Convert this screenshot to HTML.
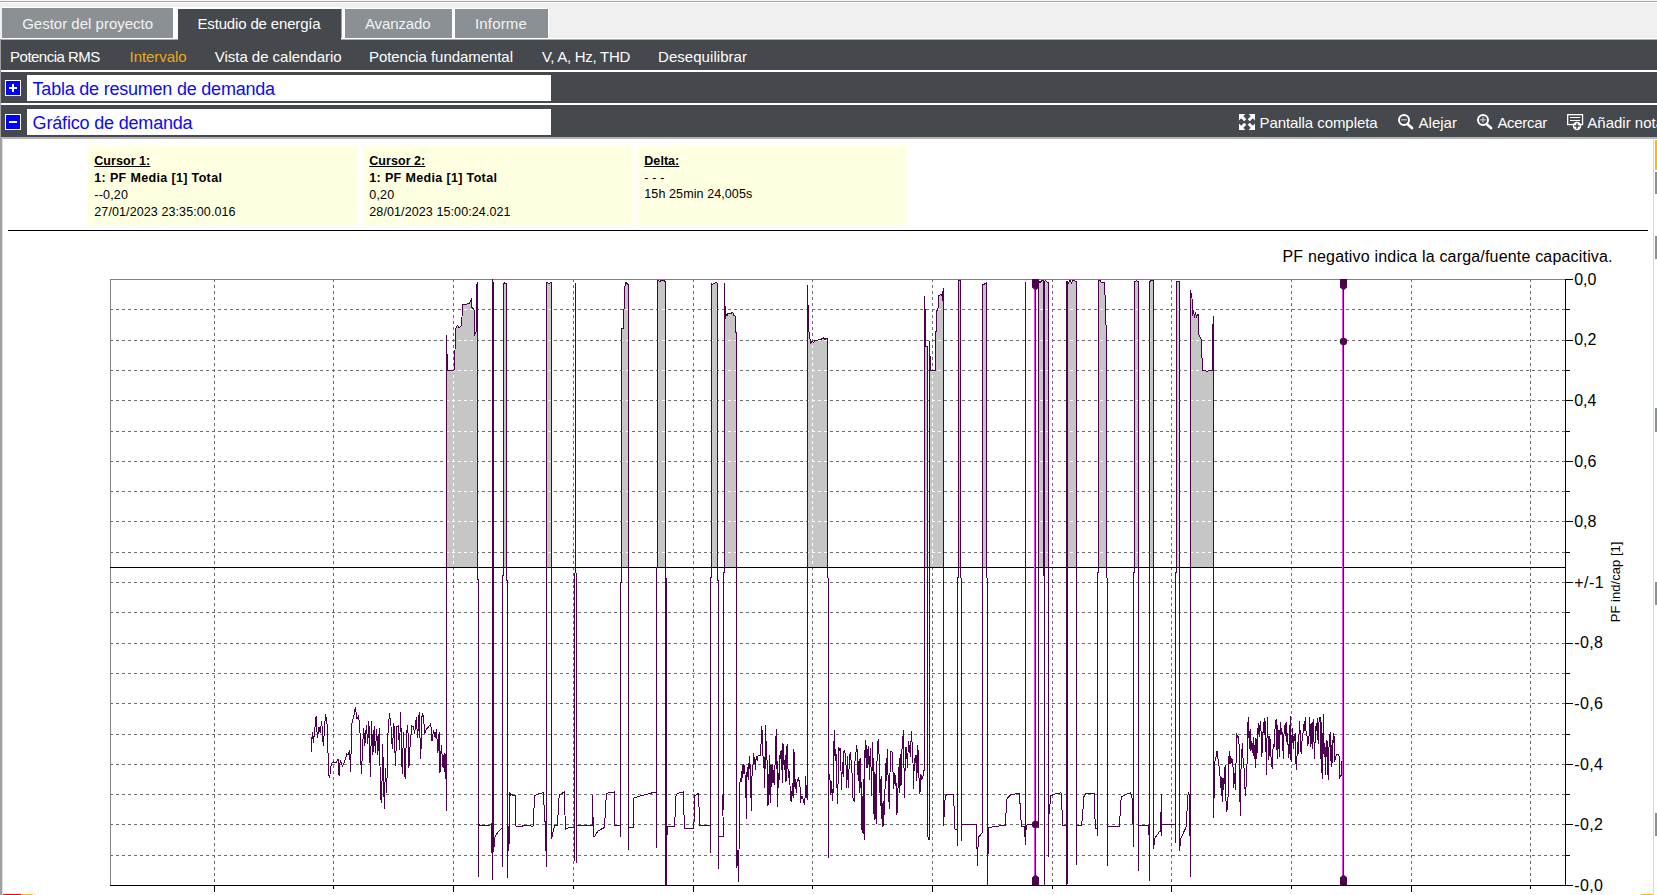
<!DOCTYPE html>
<html><head><meta charset="utf-8"><title>Estudio de energía</title>
<style>
*{box-sizing:border-box;margin:0;padding:0}
html,body{width:1657px;height:895px;overflow:hidden;background:#f0f0f0}
body{position:relative;font-family:"Liberation Sans",sans-serif;color:#fff}
.abs{position:absolute}
.t{position:absolute;white-space:nowrap;line-height:1}
.tab{position:absolute;background:#8a9094;color:#f4f4f4;font-size:15px}
.dark{position:absolute;background:#45484c}
.ico{position:absolute;width:16px;height:16px;background:#0000ff;border:1px solid #fff}
.box{position:absolute;top:145px;height:80px;width:270px;background:#ffffe1;color:#000;font-size:12.5px}
.box .t{left:6.3px;letter-spacing:.1px}
.b{font-weight:700}
.sb{position:absolute;left:1654.5px;width:2.5px;background:#8a9094}
</style></head><body>
<!-- top chrome -->
<div class="abs" style="left:0;top:0;width:1657px;height:1px;background:#f8f8f8"></div>
<div class="abs" style="left:0;top:1px;width:1657px;height:1px;background:#a6a6a6"></div>
<div class="abs" style="left:0;top:2px;width:1657px;height:1px;background:#fcfcfc"></div>

<!-- tabs -->
<div class="abs" style="left:2px;top:7px;width:172px;height:32px;background:#fff"></div>
<div class="tab" style="left:2px;top:8px;width:171px;height:30px"></div>
<div class="abs" style="left:174px;top:7px;width:167px;height:32px;background:#fff"></div><div class="abs" style="left:341px;top:9px;width:1px;height:29px;background:#9c9ea0"></div><div class="abs" style="left:342px;top:8px;width:3px;height:30px;background:#fafafa"></div><div class="abs" style="left:452px;top:8px;width:3px;height:30px;background:#fafafa"></div>
<div class="dark" style="left:178px;top:9px;width:163px;height:31px"></div>
<div class="abs" style="left:344px;top:8px;width:109px;height:31px;background:#fff"></div>
<div class="tab" style="left:345px;top:9px;width:107px;height:29px"></div>
<div class="abs" style="left:454px;top:8px;width:95px;height:31px;background:#fff"></div>
<div class="tab" style="left:455px;top:9px;width:93px;height:29px"></div>
<span class="t" style="left:22.2px;top:15.5px;font-size:15px;color:#f2f2f2">Gestor del proyecto</span>
<span class="t" style="left:197.5px;top:15.5px;font-size:15px;letter-spacing:-.16px">Estudio de energía</span>
<span class="t" style="left:365px;top:15.5px;font-size:15px;letter-spacing:-.12px;color:#f2f2f2">Avanzado</span>
<span class="t" style="left:475px;top:15.5px;font-size:15px;letter-spacing:.16px;color:#f2f2f2">Informe</span>

<div class="abs" style="left:0;top:38px;width:1657px;height:1px;background:#fff"></div>
<div class="abs" style="left:0;top:39px;width:1657px;height:1px;background:#aaacae"></div>
<div class="dark" style="left:178px;top:38px;width:163px;height:2px"></div>
<!-- left edge -->
<div class="abs" style="left:0;top:39px;width:2px;height:856px;background:#a0a0a0"></div>

<!-- submenu bar -->
<div class="dark" style="left:1px;top:40px;width:1656px;height:30px"></div>
<span class="t" style="left:10.1px;top:49px;font-size:15px;letter-spacing:-.52px">Potencia RMS</span>
<span class="t" style="left:129.6px;top:49px;font-size:15px;letter-spacing:-.06px;color:#eaa915">Intervalo</span>
<span class="t" style="left:214.8px;top:49px;font-size:15px;letter-spacing:-.03px">Vista de calendario</span>
<span class="t" style="left:369px;top:49px;font-size:15px;letter-spacing:-.06px">Potencia fundamental</span>
<span class="t" style="left:542px;top:49px;font-size:15px;letter-spacing:-.28px">V, A, Hz, THD</span>
<span class="t" style="left:658px;top:49px;font-size:15px;letter-spacing:.05px">Desequilibrar</span>

<!-- section rows -->
<div class="abs" style="left:1px;top:70px;width:1656px;height:2px;background:#fff"></div>
<div class="dark" style="left:1px;top:72px;width:1656px;height:31px"></div>
<div class="abs" style="left:27px;top:75px;width:524px;height:26px;background:#fff"></div>
<div class="ico" style="left:5px;top:80px"><svg width="14" height="14" viewBox="0 0 14 14" style="display:block"><path d="M3 7H11M7 3V11" stroke="#fff" stroke-width="2"/></svg></div>
<span class="t" style="left:32.6px;top:79.5px;font-size:18px;letter-spacing:-.22px;color:#0c0cf0">Tabla de resumen de demanda</span>

<div class="abs" style="left:1px;top:103px;width:1656px;height:2px;background:#fff"></div>
<div class="dark" style="left:1px;top:105px;width:1656px;height:32px"></div>
<div class="abs" style="left:27px;top:109px;width:524px;height:26px;background:#fff"></div>
<div class="ico" style="left:5px;top:114px"><svg width="14" height="14" viewBox="0 0 14 14" style="display:block"><path d="M3 7H11" stroke="#fff" stroke-width="2"/></svg></div>
<span class="t" style="left:32.6px;top:113.5px;font-size:18px;letter-spacing:-.18px;color:#0c0cf0">Gráfico de demanda</span>

<!-- toolbar -->
<svg class="abs" style="left:1239px;top:114px" width="16" height="16" viewBox="0 0 16 16"><g fill="#fff"><path d="M0 0H6.4L0 6.4ZM1.6 3.7L3.7 1.6L7.3 5.2L5.2 7.3Z"/><path d="M16 0H9.6L16 6.4ZM14.4 3.7L12.3 1.6L8.7 5.2L10.8 7.3Z"/><path d="M0 16H6.4L0 9.6ZM1.6 12.3L3.7 14.4L7.3 10.8L5.2 8.7Z"/><path d="M16 16H9.6L16 9.6ZM14.4 12.3L12.3 14.4L8.7 10.8L10.8 8.7Z"/></g></svg>
<span class="t" style="left:1259.5px;top:115px;font-size:15px;letter-spacing:-.07px">Pantalla completa</span>
<svg class="abs" style="left:1398px;top:114px" width="16" height="16" viewBox="0 0 16 16"><circle cx="6" cy="6" r="5" fill="none" stroke="#fff" stroke-width="2"/><path d="M9.8 10.2L14 14.1" stroke="#fff" stroke-width="2.7" stroke-linecap="round"/><path d="M3.2 5.7H8.8" stroke="#b4b4b4" stroke-width="1.5"/></svg>
<span class="t" style="left:1418.5px;top:115px;font-size:15px;letter-spacing:.02px">Alejar</span>
<svg class="abs" style="left:1477px;top:114px" width="16" height="16" viewBox="0 0 16 16"><circle cx="6" cy="6" r="5" fill="none" stroke="#fff" stroke-width="2"/><path d="M9.8 10.2L14 14.1" stroke="#fff" stroke-width="2.7" stroke-linecap="round"/><path d="M3.2 5.7H8.8M6 2.9V8.5" stroke="#b4b4b4" stroke-width="1.5"/></svg>
<span class="t" style="left:1497.4px;top:115px;font-size:15px;letter-spacing:-.3px">Acercar</span>
<svg class="abs" style="left:1567px;top:114px" width="17" height="17" viewBox="0 0 17 17"><rect x="0.65" y="0.65" width="14.9" height="9.9" fill="none" stroke="#fff" stroke-width="1.3"/><path d="M3 3.5H13.1M3 6.5H13.1" stroke="#fff" stroke-width="1.1"/><circle cx="10" cy="12" r="4.2" fill="#fff"/><path d="M7.3 12H12.7M10 9.3V14.7" stroke="#45484c" stroke-width="1.5"/></svg>
<span class="t" style="left:1587.3px;top:115px;font-size:15px">Añadir nota</span>

<!-- content area -->
<div class="abs" style="left:1px;top:137px;width:1656px;height:2px;background:#b4b6b8"></div>
<div class="abs" style="left:2px;top:139px;width:1651px;height:756px;background:#fff"></div>
<div class="abs" style="left:2px;top:139px;width:1px;height:756px;background:#dcdcdc"></div>
<div class="abs" style="left:1653px;top:139px;width:1px;height:756px;background:#d8d8d8"></div>
<div class="abs" style="left:1654px;top:139px;width:3px;height:756px;background:#fff"></div>
<div class="sb" style="top:140px;height:30px;background:#fdb813"></div>
<div class="sb" style="top:172px;height:22px"></div>
<div class="sb" style="top:236px;height:23px"></div>
<div class="sb" style="top:408px;height:24px"></div>
<div class="sb" style="top:582px;height:23px"></div>
<div class="sb" style="top:813px;height:23px"></div>
<div class="abs" style="left:3px;top:894px;width:18px;height:1px;background:#f00"></div>
<div class="abs" style="left:21px;top:894px;width:12px;height:1px;background:#fdb813"></div>
<div class="abs" style="left:1641px;top:893.5px;width:12px;height:1.5px;background:#fdb813"></div>

<!-- cursor boxes -->
<div class="box" style="left:88px">
<span class="t b" style="top:9.8px;text-decoration:underline;letter-spacing:.05px">Cursor 1:</span>
<span class="t b" style="top:26.8px;letter-spacing:.35px">1: PF Media [1] Total</span>
<span class="t" style="top:43.8px;letter-spacing:.2px">--0,20</span>
<span class="t" style="top:60.8px">27/01/2023 23:35:00.016</span>
</div>
<div class="box" style="left:363px">
<span class="t b" style="top:9.8px;text-decoration:underline;letter-spacing:.05px">Cursor 2:</span>
<span class="t b" style="top:26.8px;letter-spacing:.35px">1: PF Media [1] Total</span>
<span class="t" style="top:43.8px;letter-spacing:.2px">0,20</span>
<span class="t" style="top:60.8px">28/01/2023 15:00:24.021</span>
</div>
<div class="box" style="left:638px">
<span class="t b" style="top:9.8px;text-decoration:underline;letter-spacing:.05px">Delta:</span>
<span class="t" style="top:26.8px;letter-spacing:.2px">- - -</span>
<span class="t" style="top:43px">15h 25min 24,005s</span>
</div>
<div class="abs" style="left:8px;top:230px;width:1640px;height:1px;background:#000"></div>

<svg id="chart" width="1657" height="895" viewBox="0 0 1657 895" style="position:absolute;left:0;top:0">
<defs>
<clipPath id="up"><rect x="110" y="279" width="1456" height="288.5"/></clipPath>
<clipPath id="plot"><rect x="110" y="279" width="1456" height="607"/></clipPath>
<clipPath id="ser" clip-rule="evenodd"><path clip-rule="evenodd" d="M311.2 751.5 L312.3 732.5 L313.4 742.5 L316.1 716.4 L317.4 738.1 L319 726.9 L320.1 732.5 L321.7 721.3 L323.3 745.9 L325.5 714.1 L327.3 725.8 L328.6 775 L329.7 777.2 L331.3 763.8 L333.5 762 L335.8 762.7 L338 759.3 L339.1 776.1 L340.2 760.4 L342.5 766 L344.7 761.5 L346.9 753.7 L348.1 754.8 L349.6 750.4 L350.5 771.6 L351.9 723.5 L353.7 716.8 L355.4 707.4 L357 719.1 L358.6 715.7 L359.9 729.1 L360.8 761.5 L361.5 773.8 L362.6 745.9 L363.7 728 L364.8 745.9 L366.4 724.7 L367.7 743.7 L368.9 721.3 L370.4 777.2 L371.5 721.3 L372.9 754.8 L374.2 725.8 L375.3 752.6 L376.7 729.1 L377.8 754.8 L379.4 728 L380.5 797.3 L381.6 802.9 L382.7 743.7 L384.3 808.5 L385.4 768.2 L386.7 792.8 L387.9 734.7 L389.4 713.5 L391.2 728 L392.3 749.2 L393.9 723.5 L395.5 766 L396.8 726.9 L398.4 725.8 L399.5 750.4 L400.6 712.4 L402.2 773.8 L403.5 732.5 L405.1 779.4 L406.4 734.7 L407.8 724.7 L408.9 768.2 L410.2 743.7 L411.8 725.8 L413.3 726.9 L414.7 733.6 L416.3 716.8 L417.6 738.1 L419.2 712.4 L420.7 759.3 L422.1 713.5 L423.4 715.7 L424.7 733.6 L426.3 729.1 L428.5 726.9 L430.8 723.5 L431.9 741.4 L433.5 730.2 L435.3 738.1 L436.4 729.1 L437.9 752.6 L439.1 732.5 L440 772.7 L441.3 744.8 L443.1 768.2 L444.2 752.6 L445.3 779.4 L446.2 747 L446.5 811 L446.5 335 L447.5 370 L454 370 L455 350 L456 328 L457.5 325.5 L459 328 L461 326.5 L462 317 L462.5 305 L466 304.5 L469.5 303 L471.5 299 L472 307.5 L473.5 309 L474.5 311 L474.5 334.7 L476.5 331.5 L476.5 285.5 L477.5 282.5 L477.5 579 L478.5 579 L478.5 876.5 L478.5 824 L480 826 L485 825.5 L490 825 L491.5 824 L492.5 880 L492.5 279.5 L493.5 285 L493.5 851.6 L495 837 L498 832 L502 828 L502.5 866.6 L502.5 575 L503.5 575 L503.5 284 L504.5 283 L506.5 284 L506.5 580 L507.5 580 L507.5 877.5 L508.5 826 L509.5 843.7 L509.5 792 L510.5 795 L512 794 L513 796 L515 795 L515.5 826 L520 826.5 L525 825.5 L533 826.2 L534.7 795.7 L538 794 L543.3 792.7 L545.2 824.4 L546.5 866.6 L546.5 283 L547.5 282.6 L549 283.5 L551.5 282.6 L551.5 838.7 L554.7 825 L557.4 825 L559.2 795 L564.2 792 L565.5 829 L570 827 L574 828 L574.5 860.6 L574.5 574 L575.5 572 L575.5 283.3 L575.5 572 L576.5 574 L576.5 862.9 L577 825.2 L585 825.5 L592.4 825.2 L592.5 795 L593.5 836.5 L594.6 836.5 L598 831 L604.5 827.4 L606.4 793.5 L610 792.5 L614.3 792 L615 825.2 L620.3 825.2 L620.5 836.5 L620.5 582 L621.5 582 L621.5 328.6 L623.5 328.6 L624.5 290 L625.5 282.3 L628.5 284.8 L628.5 850.4 L628.6 827.4 L633.1 827.4 L633.9 798 L640 796 L648 794 L655 792 L656.5 792 L656.5 847.8 L656.5 570 L657.5 565 L657.5 280.3 L660 281.5 L662 280 L664.5 281 L665.5 282 L665.5 884.8 L666.5 884.8 L666.5 578 L666.5 840 L667.8 826 L674.6 826 L676.1 794.5 L680 792.5 L683.2 792 L684.5 828.4 L689 828 L693.8 828.4 L694.9 795.5 L698.5 793.4 L699.7 825.2 L705 825.5 L710.3 825.2 L710.5 853.2 L710.5 580 L711.5 575 L711.5 283.5 L712 285 L713 284 L716 282.5 L717.5 283.5 L717.5 580 L718.5 580 L718.5 868.7 L718.5 836.9 L723.5 836.9 L722.5 795 L723.5 810 L723.5 575 L724.5 570 L724.5 283 L725.3 318.8 L726 314 L727 316 L728 313 L730 314 L732.8 312 L733.5 315 L735 315.8 L736 332.4 L736.5 332.4 L736.5 867.7 L737.5 850 L738.5 882 L739 850 L739.5 815.6 L739.5 784.3 L740.8 778.1 L741.7 782 L742.2 764.7 L742.8 777.6 L743.7 764.2 L744.4 770.9 L744.8 764.7 L745.5 798.2 L745.8 775.9 L746.4 818.9 L746.8 774.2 L747.5 767.5 L748.2 780.4 L748.9 765.3 L749.5 756.3 L750 768.6 L750.6 763.6 L751.1 804.4 L751.5 810.5 L752 775.9 L752.7 775.3 L753.4 753.5 L754 764.2 L754.9 756.9 L755.6 769.7 L756.2 756.3 L757.3 760.8 L758 755.8 L760.1 755.8 L760.9 748.5 L761.5 726.2 L762 732.9 L762.5 730.1 L762.9 753.5 L763.6 767.5 L764.3 757.5 L764.7 787.6 L765.2 757.5 L765.6 725.3 L766.1 744.6 L766.7 744.1 L767.2 769.7 L767.6 805.5 L768.3 804.9 L768.7 788.7 L769.4 755.2 L769.9 793.2 L770.5 802.7 L771 764.7 L771.6 786.5 L772.3 764.2 L773 783.2 L773.7 769.7 L774.3 785.4 L775 765.3 L775.7 736.2 L776.3 764.2 L776.8 729.3 L777.2 806.6 L777.7 760.8 L778.4 787.6 L779 775.3 L779.5 779.8 L780.1 750.8 L780.8 754.1 L781.5 769.7 L782.2 743.5 L782.6 783.2 L783 743.5 L783.7 757.5 L784.2 769.7 L784.8 759.7 L785.5 781.5 L786.2 746.3 L786.6 780.9 L787.3 744.3 L788 768.6 L788.6 777.6 L789.3 770.9 L790 785.4 L790.6 801 L791.3 791 L791.8 802.2 L792.4 783.2 L793.1 797.7 L793.5 749.1 L794 784.3 L794.4 752.4 L794.9 786.5 L795.6 779.2 L796.2 793.2 L796.9 782 L797.6 780.9 L798.5 777.6 L799.1 782 L799.8 779.8 L800.5 803.3 L801.1 796.6 L801.8 798.2 L802.5 797.1 L803.4 801 L804.3 804.4 L804.9 802.2 L805.6 776.5 L806.1 797.7 L806.7 785.4 L807.4 799.4 L807.5 799.7 L807.5 285.3 L808.5 323 L809 332 L810.5 343 L812 341.5 L813.5 342.5 L815 340.5 L817 341 L819 339 L821 339.5 L823.3 337.5 L825 339.5 L826 338 L827.5 338.4 L827.5 575 L828.5 580 L828.5 857.5 L828.9 773.8 L830 780 L830.9 794.7 L831.7 781.4 L832.5 801 L833.1 791.9 L833.7 747.9 L834.5 730.1 L835.1 760.5 L835.9 749.3 L836.7 780 L837.6 803.8 L838.1 780 L838.7 747.2 L839.5 750 L840.4 747.9 L841.5 789.8 L842.3 761.9 L843.2 777.2 L844 750.7 L844.8 751.4 L845.9 761.9 L846.8 788.4 L847.6 756.3 L848.5 788.4 L849.3 757.7 L850.4 752.1 L851.2 761.9 L852.1 774.5 L852.9 797.5 L854.3 801.7 L854.9 761.9 L855.7 756.3 L856.6 745.1 L857.4 753.5 L858.2 781.4 L859.1 759.1 L859.9 792.6 L860.7 758.4 L861.6 826.1 L862.4 833.1 L863.3 778.6 L864.1 840.1 L864.7 756.3 L865.5 740.2 L866.3 767.5 L866.9 745.1 L867.7 767.5 L868.6 746.5 L869.4 780 L870.2 747.9 L871.1 768.9 L871.6 796.1 L872.5 742.3 L873.3 766.1 L874.1 819.8 L875 771.7 L875.5 812.2 L876.4 824 L877.2 742.3 L878.6 739.5 L879.5 771.7 L880.3 805.9 L881.1 775.9 L882.2 826.8 L883.1 801 L883.6 826.1 L884.5 802.4 L885.3 781.4 L886.2 757.7 L886.7 781.4 L887.6 749.3 L888.1 780 L888.9 800.3 L889.5 808.7 L890.3 752.1 L891.5 751.4 L892.6 752.8 L893.4 789.1 L894.3 773.1 L895.1 785.6 L895.9 775.2 L896.5 814.9 L897.6 811.5 L898.4 767.5 L899.3 792.6 L900.1 754.2 L901 785.6 L901.8 752.1 L902.6 740.2 L903.5 730.1 L904 767.5 L904.6 797.5 L905.4 747.2 L906.5 747.9 L907.4 767.5 L908.5 740.9 L909.6 749.3 L910.5 757 L911.3 731.2 L912.1 743 L913 763.3 L913.5 789.1 L914.4 757.7 L915.2 762.6 L916 754.9 L916.9 781.4 L917.4 745.1 L918.3 752.1 L919.1 781.4 L919.9 794 L920.8 773.8 L921.9 779.3 L923 775.9 L923.9 770.3 L924.5 770 L924.5 296 L925.5 321 L925.5 346 L927.5 346 L927.5 834 L928.5 839.5 L929.5 839.5 L929.5 341.4 L930.5 370 L935.5 370 L935.5 331.4 L936.5 331.4 L936.5 310.2 L937.5 310 L937.5 308.5 L938.3 308 L938.3 296.8 L939 295.6 L941.8 294 L942.4 300.7 L942.6 294 L943.5 288 L943.5 825.6 L945.2 796.5 L947 794.5 L953.5 794.5 L955 829 L957.2 829 L957.5 845.5 L957.5 580 L958.5 575 L958.5 280.5 L960.5 280.5 L960.5 575 L961.5 580 L961.5 840.7 L962 824.7 L970 824 L976.6 824.7 L977.3 865.6 L978.4 837.2 L982.4 832.7 L982.5 284.8 L984.5 284 L986.5 283 L986.5 575 L987.5 580 L987.5 884.8 L987.5 853 L988.5 853 L988.5 827.4 L996 826.5 L1005.2 825.2 L1007 798.8 L1010.8 794.5 L1019.4 793.5 L1021.4 826 L1024.4 826 L1025.5 844.8 L1025.5 282.3 L1025.5 835 L1026.5 826 L1027 824.7 L1038.5 824.7 L1038.5 827.6 L1038.5 281 L1040 282.5 L1042 280.5 L1043.5 281 L1043.5 575 L1044.5 575 L1044.5 884.8 L1044.5 282 L1045.5 280.5 L1047 282 L1048.5 282 L1048.5 856.8 L1048.5 819.9 L1050.8 795.7 L1055 794 L1061 792.7 L1062.9 825.2 L1065.9 825.2 L1066.5 826 L1066.5 885 L1066.5 281 L1067.5 281 L1067.5 884 L1067.5 283 L1068.5 283 L1070 280.5 L1071.5 283 L1073 280.5 L1076.5 281.5 L1076.5 864.8 L1077 825.2 L1081.7 825.2 L1084 796.5 L1086 793.5 L1094.2 793.5 L1095.3 828.2 L1097.5 828.2 L1097.5 835.7 L1097.5 575 L1098.5 570 L1098.5 281 L1100 280.5 L1102 283 L1104.3 282.6 L1105.7 306.7 L1106.1 329.3 L1106.5 575 L1107.5 580 L1107.5 865.9 L1108 826.7 L1119.4 826.7 L1121.2 797.2 L1126 794.5 L1130.8 792.7 L1132.5 800 L1133.5 846.7 L1133.5 575 L1134.5 570 L1134.5 282 L1136.5 280.5 L1138.5 282 L1138.5 870.9 L1139 825.2 L1148.9 825.2 L1149.5 880.5 L1149.5 281.5 L1151.5 280.5 L1153.5 281 L1153.5 848.6 L1155 838 L1159.5 831.6 L1160.5 831 L1161.5 794.4 L1161.5 835.7 L1162 824.8 L1175.5 824.8 L1175.5 843.3 L1175.5 575 L1176.5 570 L1176.5 281.8 L1179.5 282 L1179.5 850.7 L1181 838 L1186 827.3 L1188.2 792.3 L1189.5 795 L1190.5 876.6 L1190.5 290 L1192 298.4 L1192.5 315.8 L1193.5 310 L1194.5 318 L1195.5 312 L1196.5 317 L1198 314 L1198.8 334.6 L1201 339 L1201.9 355 L1202.6 370.8 L1205 370 L1207 372 L1209 370.5 L1212.4 370.8 L1212.4 333.9 L1213.5 316.5 L1213.5 818.4 L1214.2 790.8 L1214.7 762.7 L1215.5 758 L1216.3 756.6 L1217.1 750.6 L1217.9 758.6 L1218.7 764 L1219.8 772.1 L1220.6 788.2 L1221.4 777.4 L1222.2 801.6 L1223 778.1 L1223.8 789.5 L1224.6 768 L1225.4 765.4 L1226.2 812.3 L1227 801.6 L1227.8 810.3 L1228.4 770.7 L1229.2 751.3 L1230 764 L1230.8 756 L1231.6 762.7 L1232.4 758.6 L1233.2 769.4 L1233.8 788.2 L1234.6 773.4 L1235.4 789.5 L1235.9 772.1 L1236.4 733.2 L1237.5 737.2 L1238.3 736.5 L1239.1 745.2 L1239.7 793.5 L1240.5 815.6 L1241 769.4 L1241.8 751.9 L1242.6 742.6 L1243.1 761.3 L1243.9 765.4 L1244.7 785.5 L1245.6 795.5 L1246.4 780.1 L1246.9 770.7 L1247.7 725.1 L1248.5 717.3 L1249.3 749.3 L1250.1 729.1 L1250.9 751.3 L1251.7 741.2 L1252.5 753.3 L1253.3 737.2 L1254.1 758 L1254.7 745.2 L1255.2 768 L1256 738.5 L1256.8 759.3 L1257.6 733.8 L1258.4 723.1 L1259.2 737.2 L1260.3 721.1 L1261.1 731.8 L1261.6 756.6 L1262.5 749.3 L1263.3 721.8 L1264.1 734.5 L1264.9 718.4 L1265.7 736.5 L1266.5 774.7 L1267.3 717.3 L1268.1 738.5 L1268.9 760 L1269.7 735.8 L1270.5 745.2 L1271.3 764 L1272.4 768.7 L1273.2 743.9 L1274 747.9 L1274.8 731.8 L1275.6 721.8 L1276.4 719.1 L1277.2 758.6 L1277.7 725.1 L1278.5 738.5 L1279.4 757.3 L1280.2 722.4 L1281 734.5 L1281.8 728.5 L1282.6 742.6 L1283.4 759.3 L1284.2 726.5 L1285 725.1 L1285 736.4 L1285.8 724 L1286.3 722.1 L1286.9 742.1 L1287.7 733.5 L1288.4 757.8 L1289 744.9 L1289.6 725 L1290.1 760.1 L1290.5 716.4 L1291.1 738.3 L1291.7 761.6 L1292.2 727.8 L1292.8 740.2 L1293.4 748.7 L1293.9 736.4 L1294.5 741.1 L1295.1 733 L1295.6 758.2 L1296.4 769.6 L1297 756.3 L1297.7 742.1 L1298.3 754.4 L1298.9 738.3 L1299.4 721.2 L1300 729.7 L1300.6 751.6 L1301.3 752.5 L1301.9 741.1 L1302.7 740.2 L1303.4 724.5 L1304 731.6 L1304.8 724 L1305.3 717.2 L1306.1 732.6 L1306.9 733.5 L1307.6 745.9 L1308.4 743 L1309 736.4 L1309.5 717.2 L1310.3 727.8 L1310.9 747.3 L1311.6 725 L1312.4 722.1 L1312.9 748.7 L1313.3 719.3 L1313.9 738.3 L1314.5 758.7 L1315 743 L1315.6 730.2 L1316.4 723.1 L1316.9 730.7 L1317.5 718.3 L1318.1 743.5 L1318.7 729.7 L1319.2 717.2 L1320.2 717.8 L1320.7 743.5 L1321.3 772.5 L1321.9 722.1 L1322.5 778.7 L1323 756.8 L1323.4 714 L1324 743 L1324.5 757.3 L1325.1 746.8 L1325.7 774.9 L1326.3 740.6 L1327 740.2 L1327.6 767.7 L1328.3 779.6 L1328.9 750.6 L1329.5 734.5 L1330.2 733.5 L1330.8 758.2 L1331.6 766.8 L1332.1 740.2 L1332.7 763 L1333.1 738.3 L1333.5 732.6 L1334.2 737.3 L1334.6 762 L1335.4 757.3 L1336.3 755.4 L1337.3 754.4 L1338.4 754.4 L1339.4 756.8 L1339.6 777.7 L1340.5 776.3 L1341.3 774.9 L1341.7 761.1 L1342.2 775.3Z"/></clipPath>
</defs>
<g shape-rendering="crispEdges" fill="none">
<path d="M110 309.5H1566M110 340.5H1566M110 370.5H1566M110 400.5H1566M110 431.5H1566M110 461.5H1566M110 491.5H1566M110 521.5H1566M110 552.5H1566M110 582.5H1566M110 612.5H1566M110 643.5H1566M110 673.5H1566M110 703.5H1566M110 734.5H1566M110 764.5H1566M110 794.5H1566M110 824.5H1566M110 855.5H1566M214.5 279V885M333.5 279V885M453.5 279V885M573.5 279V885M693.5 279V885M812.5 279V885M932.5 279V885M1052.5 279V885M1171.5 279V885M1291.5 279V885M1411.5 279V885M1530.5 279V885" stroke="#6e6e6e" stroke-width="1" stroke-dasharray="3 3"/>
<g clip-path="url(#up)"><path d="M311.2 751.5 L312.3 732.5 L313.4 742.5 L316.1 716.4 L317.4 738.1 L319 726.9 L320.1 732.5 L321.7 721.3 L323.3 745.9 L325.5 714.1 L327.3 725.8 L328.6 775 L329.7 777.2 L331.3 763.8 L333.5 762 L335.8 762.7 L338 759.3 L339.1 776.1 L340.2 760.4 L342.5 766 L344.7 761.5 L346.9 753.7 L348.1 754.8 L349.6 750.4 L350.5 771.6 L351.9 723.5 L353.7 716.8 L355.4 707.4 L357 719.1 L358.6 715.7 L359.9 729.1 L360.8 761.5 L361.5 773.8 L362.6 745.9 L363.7 728 L364.8 745.9 L366.4 724.7 L367.7 743.7 L368.9 721.3 L370.4 777.2 L371.5 721.3 L372.9 754.8 L374.2 725.8 L375.3 752.6 L376.7 729.1 L377.8 754.8 L379.4 728 L380.5 797.3 L381.6 802.9 L382.7 743.7 L384.3 808.5 L385.4 768.2 L386.7 792.8 L387.9 734.7 L389.4 713.5 L391.2 728 L392.3 749.2 L393.9 723.5 L395.5 766 L396.8 726.9 L398.4 725.8 L399.5 750.4 L400.6 712.4 L402.2 773.8 L403.5 732.5 L405.1 779.4 L406.4 734.7 L407.8 724.7 L408.9 768.2 L410.2 743.7 L411.8 725.8 L413.3 726.9 L414.7 733.6 L416.3 716.8 L417.6 738.1 L419.2 712.4 L420.7 759.3 L422.1 713.5 L423.4 715.7 L424.7 733.6 L426.3 729.1 L428.5 726.9 L430.8 723.5 L431.9 741.4 L433.5 730.2 L435.3 738.1 L436.4 729.1 L437.9 752.6 L439.1 732.5 L440 772.7 L441.3 744.8 L443.1 768.2 L444.2 752.6 L445.3 779.4 L446.2 747 L446.5 811 L446.5 335 L447.5 370 L454 370 L455 350 L456 328 L457.5 325.5 L459 328 L461 326.5 L462 317 L462.5 305 L466 304.5 L469.5 303 L471.5 299 L472 307.5 L473.5 309 L474.5 311 L474.5 334.7 L476.5 331.5 L476.5 285.5 L477.5 282.5 L477.5 579 L478.5 579 L478.5 876.5 L478.5 824 L480 826 L485 825.5 L490 825 L491.5 824 L492.5 880 L492.5 279.5 L493.5 285 L493.5 851.6 L495 837 L498 832 L502 828 L502.5 866.6 L502.5 575 L503.5 575 L503.5 284 L504.5 283 L506.5 284 L506.5 580 L507.5 580 L507.5 877.5 L508.5 826 L509.5 843.7 L509.5 792 L510.5 795 L512 794 L513 796 L515 795 L515.5 826 L520 826.5 L525 825.5 L533 826.2 L534.7 795.7 L538 794 L543.3 792.7 L545.2 824.4 L546.5 866.6 L546.5 283 L547.5 282.6 L549 283.5 L551.5 282.6 L551.5 838.7 L554.7 825 L557.4 825 L559.2 795 L564.2 792 L565.5 829 L570 827 L574 828 L574.5 860.6 L574.5 574 L575.5 572 L575.5 283.3 L575.5 572 L576.5 574 L576.5 862.9 L577 825.2 L585 825.5 L592.4 825.2 L592.5 795 L593.5 836.5 L594.6 836.5 L598 831 L604.5 827.4 L606.4 793.5 L610 792.5 L614.3 792 L615 825.2 L620.3 825.2 L620.5 836.5 L620.5 582 L621.5 582 L621.5 328.6 L623.5 328.6 L624.5 290 L625.5 282.3 L628.5 284.8 L628.5 850.4 L628.6 827.4 L633.1 827.4 L633.9 798 L640 796 L648 794 L655 792 L656.5 792 L656.5 847.8 L656.5 570 L657.5 565 L657.5 280.3 L660 281.5 L662 280 L664.5 281 L665.5 282 L665.5 884.8 L666.5 884.8 L666.5 578 L666.5 840 L667.8 826 L674.6 826 L676.1 794.5 L680 792.5 L683.2 792 L684.5 828.4 L689 828 L693.8 828.4 L694.9 795.5 L698.5 793.4 L699.7 825.2 L705 825.5 L710.3 825.2 L710.5 853.2 L710.5 580 L711.5 575 L711.5 283.5 L712 285 L713 284 L716 282.5 L717.5 283.5 L717.5 580 L718.5 580 L718.5 868.7 L718.5 836.9 L723.5 836.9 L722.5 795 L723.5 810 L723.5 575 L724.5 570 L724.5 283 L725.3 318.8 L726 314 L727 316 L728 313 L730 314 L732.8 312 L733.5 315 L735 315.8 L736 332.4 L736.5 332.4 L736.5 867.7 L737.5 850 L738.5 882 L739 850 L739.5 815.6 L739.5 784.3 L740.8 778.1 L741.7 782 L742.2 764.7 L742.8 777.6 L743.7 764.2 L744.4 770.9 L744.8 764.7 L745.5 798.2 L745.8 775.9 L746.4 818.9 L746.8 774.2 L747.5 767.5 L748.2 780.4 L748.9 765.3 L749.5 756.3 L750 768.6 L750.6 763.6 L751.1 804.4 L751.5 810.5 L752 775.9 L752.7 775.3 L753.4 753.5 L754 764.2 L754.9 756.9 L755.6 769.7 L756.2 756.3 L757.3 760.8 L758 755.8 L760.1 755.8 L760.9 748.5 L761.5 726.2 L762 732.9 L762.5 730.1 L762.9 753.5 L763.6 767.5 L764.3 757.5 L764.7 787.6 L765.2 757.5 L765.6 725.3 L766.1 744.6 L766.7 744.1 L767.2 769.7 L767.6 805.5 L768.3 804.9 L768.7 788.7 L769.4 755.2 L769.9 793.2 L770.5 802.7 L771 764.7 L771.6 786.5 L772.3 764.2 L773 783.2 L773.7 769.7 L774.3 785.4 L775 765.3 L775.7 736.2 L776.3 764.2 L776.8 729.3 L777.2 806.6 L777.7 760.8 L778.4 787.6 L779 775.3 L779.5 779.8 L780.1 750.8 L780.8 754.1 L781.5 769.7 L782.2 743.5 L782.6 783.2 L783 743.5 L783.7 757.5 L784.2 769.7 L784.8 759.7 L785.5 781.5 L786.2 746.3 L786.6 780.9 L787.3 744.3 L788 768.6 L788.6 777.6 L789.3 770.9 L790 785.4 L790.6 801 L791.3 791 L791.8 802.2 L792.4 783.2 L793.1 797.7 L793.5 749.1 L794 784.3 L794.4 752.4 L794.9 786.5 L795.6 779.2 L796.2 793.2 L796.9 782 L797.6 780.9 L798.5 777.6 L799.1 782 L799.8 779.8 L800.5 803.3 L801.1 796.6 L801.8 798.2 L802.5 797.1 L803.4 801 L804.3 804.4 L804.9 802.2 L805.6 776.5 L806.1 797.7 L806.7 785.4 L807.4 799.4 L807.5 799.7 L807.5 285.3 L808.5 323 L809 332 L810.5 343 L812 341.5 L813.5 342.5 L815 340.5 L817 341 L819 339 L821 339.5 L823.3 337.5 L825 339.5 L826 338 L827.5 338.4 L827.5 575 L828.5 580 L828.5 857.5 L828.9 773.8 L830 780 L830.9 794.7 L831.7 781.4 L832.5 801 L833.1 791.9 L833.7 747.9 L834.5 730.1 L835.1 760.5 L835.9 749.3 L836.7 780 L837.6 803.8 L838.1 780 L838.7 747.2 L839.5 750 L840.4 747.9 L841.5 789.8 L842.3 761.9 L843.2 777.2 L844 750.7 L844.8 751.4 L845.9 761.9 L846.8 788.4 L847.6 756.3 L848.5 788.4 L849.3 757.7 L850.4 752.1 L851.2 761.9 L852.1 774.5 L852.9 797.5 L854.3 801.7 L854.9 761.9 L855.7 756.3 L856.6 745.1 L857.4 753.5 L858.2 781.4 L859.1 759.1 L859.9 792.6 L860.7 758.4 L861.6 826.1 L862.4 833.1 L863.3 778.6 L864.1 840.1 L864.7 756.3 L865.5 740.2 L866.3 767.5 L866.9 745.1 L867.7 767.5 L868.6 746.5 L869.4 780 L870.2 747.9 L871.1 768.9 L871.6 796.1 L872.5 742.3 L873.3 766.1 L874.1 819.8 L875 771.7 L875.5 812.2 L876.4 824 L877.2 742.3 L878.6 739.5 L879.5 771.7 L880.3 805.9 L881.1 775.9 L882.2 826.8 L883.1 801 L883.6 826.1 L884.5 802.4 L885.3 781.4 L886.2 757.7 L886.7 781.4 L887.6 749.3 L888.1 780 L888.9 800.3 L889.5 808.7 L890.3 752.1 L891.5 751.4 L892.6 752.8 L893.4 789.1 L894.3 773.1 L895.1 785.6 L895.9 775.2 L896.5 814.9 L897.6 811.5 L898.4 767.5 L899.3 792.6 L900.1 754.2 L901 785.6 L901.8 752.1 L902.6 740.2 L903.5 730.1 L904 767.5 L904.6 797.5 L905.4 747.2 L906.5 747.9 L907.4 767.5 L908.5 740.9 L909.6 749.3 L910.5 757 L911.3 731.2 L912.1 743 L913 763.3 L913.5 789.1 L914.4 757.7 L915.2 762.6 L916 754.9 L916.9 781.4 L917.4 745.1 L918.3 752.1 L919.1 781.4 L919.9 794 L920.8 773.8 L921.9 779.3 L923 775.9 L923.9 770.3 L924.5 770 L924.5 296 L925.5 321 L925.5 346 L927.5 346 L927.5 834 L928.5 839.5 L929.5 839.5 L929.5 341.4 L930.5 370 L935.5 370 L935.5 331.4 L936.5 331.4 L936.5 310.2 L937.5 310 L937.5 308.5 L938.3 308 L938.3 296.8 L939 295.6 L941.8 294 L942.4 300.7 L942.6 294 L943.5 288 L943.5 825.6 L945.2 796.5 L947 794.5 L953.5 794.5 L955 829 L957.2 829 L957.5 845.5 L957.5 580 L958.5 575 L958.5 280.5 L960.5 280.5 L960.5 575 L961.5 580 L961.5 840.7 L962 824.7 L970 824 L976.6 824.7 L977.3 865.6 L978.4 837.2 L982.4 832.7 L982.5 284.8 L984.5 284 L986.5 283 L986.5 575 L987.5 580 L987.5 884.8 L987.5 853 L988.5 853 L988.5 827.4 L996 826.5 L1005.2 825.2 L1007 798.8 L1010.8 794.5 L1019.4 793.5 L1021.4 826 L1024.4 826 L1025.5 844.8 L1025.5 282.3 L1025.5 835 L1026.5 826 L1027 824.7 L1038.5 824.7 L1038.5 827.6 L1038.5 281 L1040 282.5 L1042 280.5 L1043.5 281 L1043.5 575 L1044.5 575 L1044.5 884.8 L1044.5 282 L1045.5 280.5 L1047 282 L1048.5 282 L1048.5 856.8 L1048.5 819.9 L1050.8 795.7 L1055 794 L1061 792.7 L1062.9 825.2 L1065.9 825.2 L1066.5 826 L1066.5 885 L1066.5 281 L1067.5 281 L1067.5 884 L1067.5 283 L1068.5 283 L1070 280.5 L1071.5 283 L1073 280.5 L1076.5 281.5 L1076.5 864.8 L1077 825.2 L1081.7 825.2 L1084 796.5 L1086 793.5 L1094.2 793.5 L1095.3 828.2 L1097.5 828.2 L1097.5 835.7 L1097.5 575 L1098.5 570 L1098.5 281 L1100 280.5 L1102 283 L1104.3 282.6 L1105.7 306.7 L1106.1 329.3 L1106.5 575 L1107.5 580 L1107.5 865.9 L1108 826.7 L1119.4 826.7 L1121.2 797.2 L1126 794.5 L1130.8 792.7 L1132.5 800 L1133.5 846.7 L1133.5 575 L1134.5 570 L1134.5 282 L1136.5 280.5 L1138.5 282 L1138.5 870.9 L1139 825.2 L1148.9 825.2 L1149.5 880.5 L1149.5 281.5 L1151.5 280.5 L1153.5 281 L1153.5 848.6 L1155 838 L1159.5 831.6 L1160.5 831 L1161.5 794.4 L1161.5 835.7 L1162 824.8 L1175.5 824.8 L1175.5 843.3 L1175.5 575 L1176.5 570 L1176.5 281.8 L1179.5 282 L1179.5 850.7 L1181 838 L1186 827.3 L1188.2 792.3 L1189.5 795 L1190.5 876.6 L1190.5 290 L1192 298.4 L1192.5 315.8 L1193.5 310 L1194.5 318 L1195.5 312 L1196.5 317 L1198 314 L1198.8 334.6 L1201 339 L1201.9 355 L1202.6 370.8 L1205 370 L1207 372 L1209 370.5 L1212.4 370.8 L1212.4 333.9 L1213.5 316.5 L1213.5 818.4 L1214.2 790.8 L1214.7 762.7 L1215.5 758 L1216.3 756.6 L1217.1 750.6 L1217.9 758.6 L1218.7 764 L1219.8 772.1 L1220.6 788.2 L1221.4 777.4 L1222.2 801.6 L1223 778.1 L1223.8 789.5 L1224.6 768 L1225.4 765.4 L1226.2 812.3 L1227 801.6 L1227.8 810.3 L1228.4 770.7 L1229.2 751.3 L1230 764 L1230.8 756 L1231.6 762.7 L1232.4 758.6 L1233.2 769.4 L1233.8 788.2 L1234.6 773.4 L1235.4 789.5 L1235.9 772.1 L1236.4 733.2 L1237.5 737.2 L1238.3 736.5 L1239.1 745.2 L1239.7 793.5 L1240.5 815.6 L1241 769.4 L1241.8 751.9 L1242.6 742.6 L1243.1 761.3 L1243.9 765.4 L1244.7 785.5 L1245.6 795.5 L1246.4 780.1 L1246.9 770.7 L1247.7 725.1 L1248.5 717.3 L1249.3 749.3 L1250.1 729.1 L1250.9 751.3 L1251.7 741.2 L1252.5 753.3 L1253.3 737.2 L1254.1 758 L1254.7 745.2 L1255.2 768 L1256 738.5 L1256.8 759.3 L1257.6 733.8 L1258.4 723.1 L1259.2 737.2 L1260.3 721.1 L1261.1 731.8 L1261.6 756.6 L1262.5 749.3 L1263.3 721.8 L1264.1 734.5 L1264.9 718.4 L1265.7 736.5 L1266.5 774.7 L1267.3 717.3 L1268.1 738.5 L1268.9 760 L1269.7 735.8 L1270.5 745.2 L1271.3 764 L1272.4 768.7 L1273.2 743.9 L1274 747.9 L1274.8 731.8 L1275.6 721.8 L1276.4 719.1 L1277.2 758.6 L1277.7 725.1 L1278.5 738.5 L1279.4 757.3 L1280.2 722.4 L1281 734.5 L1281.8 728.5 L1282.6 742.6 L1283.4 759.3 L1284.2 726.5 L1285 725.1 L1285 736.4 L1285.8 724 L1286.3 722.1 L1286.9 742.1 L1287.7 733.5 L1288.4 757.8 L1289 744.9 L1289.6 725 L1290.1 760.1 L1290.5 716.4 L1291.1 738.3 L1291.7 761.6 L1292.2 727.8 L1292.8 740.2 L1293.4 748.7 L1293.9 736.4 L1294.5 741.1 L1295.1 733 L1295.6 758.2 L1296.4 769.6 L1297 756.3 L1297.7 742.1 L1298.3 754.4 L1298.9 738.3 L1299.4 721.2 L1300 729.7 L1300.6 751.6 L1301.3 752.5 L1301.9 741.1 L1302.7 740.2 L1303.4 724.5 L1304 731.6 L1304.8 724 L1305.3 717.2 L1306.1 732.6 L1306.9 733.5 L1307.6 745.9 L1308.4 743 L1309 736.4 L1309.5 717.2 L1310.3 727.8 L1310.9 747.3 L1311.6 725 L1312.4 722.1 L1312.9 748.7 L1313.3 719.3 L1313.9 738.3 L1314.5 758.7 L1315 743 L1315.6 730.2 L1316.4 723.1 L1316.9 730.7 L1317.5 718.3 L1318.1 743.5 L1318.7 729.7 L1319.2 717.2 L1320.2 717.8 L1320.7 743.5 L1321.3 772.5 L1321.9 722.1 L1322.5 778.7 L1323 756.8 L1323.4 714 L1324 743 L1324.5 757.3 L1325.1 746.8 L1325.7 774.9 L1326.3 740.6 L1327 740.2 L1327.6 767.7 L1328.3 779.6 L1328.9 750.6 L1329.5 734.5 L1330.2 733.5 L1330.8 758.2 L1331.6 766.8 L1332.1 740.2 L1332.7 763 L1333.1 738.3 L1333.5 732.6 L1334.2 737.3 L1334.6 762 L1335.4 757.3 L1336.3 755.4 L1337.3 754.4 L1338.4 754.4 L1339.4 756.8 L1339.6 777.7 L1340.5 776.3 L1341.3 774.9 L1341.7 761.1 L1342.2 775.3Z" fill="#c6c6c6" fill-rule="evenodd" stroke="none"/>
<g clip-path="url(#ser)"><path d="M110 309.5H1566M110 340.5H1566M110 370.5H1566M110 400.5H1566M110 431.5H1566M110 461.5H1566M110 491.5H1566M110 521.5H1566M110 552.5H1566M110 582.5H1566M110 612.5H1566M110 643.5H1566M110 673.5H1566M110 703.5H1566M110 734.5H1566M110 764.5H1566M110 794.5H1566M110 824.5H1566M110 855.5H1566M214.5 279V885M333.5 279V885M453.5 279V885M573.5 279V885M693.5 279V885M812.5 279V885M932.5 279V885M1052.5 279V885M1171.5 279V885M1291.5 279V885M1411.5 279V885M1530.5 279V885" stroke="#ffffff" stroke-width="1" stroke-dasharray="3 3"/></g></g>
<path d="M110.5 885V279.5H1566" stroke="#808080" stroke-width="1"/>
<path d="M110 567.5H1566" stroke="#000" stroke-width="1"/>
<g clip-path="url(#plot)"><path d="M311.2 751.5 L312.3 732.5 L313.4 742.5 L316.1 716.4 L317.4 738.1 L319 726.9 L320.1 732.5 L321.7 721.3 L323.3 745.9 L325.5 714.1 L327.3 725.8 L328.6 775 L329.7 777.2 L331.3 763.8 L333.5 762 L335.8 762.7 L338 759.3 L339.1 776.1 L340.2 760.4 L342.5 766 L344.7 761.5 L346.9 753.7 L348.1 754.8 L349.6 750.4 L350.5 771.6 L351.9 723.5 L353.7 716.8 L355.4 707.4 L357 719.1 L358.6 715.7 L359.9 729.1 L360.8 761.5 L361.5 773.8 L362.6 745.9 L363.7 728 L364.8 745.9 L366.4 724.7 L367.7 743.7 L368.9 721.3 L370.4 777.2 L371.5 721.3 L372.9 754.8 L374.2 725.8 L375.3 752.6 L376.7 729.1 L377.8 754.8 L379.4 728 L380.5 797.3 L381.6 802.9 L382.7 743.7 L384.3 808.5 L385.4 768.2 L386.7 792.8 L387.9 734.7 L389.4 713.5 L391.2 728 L392.3 749.2 L393.9 723.5 L395.5 766 L396.8 726.9 L398.4 725.8 L399.5 750.4 L400.6 712.4 L402.2 773.8 L403.5 732.5 L405.1 779.4 L406.4 734.7 L407.8 724.7 L408.9 768.2 L410.2 743.7 L411.8 725.8 L413.3 726.9 L414.7 733.6 L416.3 716.8 L417.6 738.1 L419.2 712.4 L420.7 759.3 L422.1 713.5 L423.4 715.7 L424.7 733.6 L426.3 729.1 L428.5 726.9 L430.8 723.5 L431.9 741.4 L433.5 730.2 L435.3 738.1 L436.4 729.1 L437.9 752.6 L439.1 732.5 L440 772.7 L441.3 744.8 L443.1 768.2 L444.2 752.6 L445.3 779.4 L446.2 747 L446.5 811 L446.5 335 L447.5 370 L454 370 L455 350 L456 328 L457.5 325.5 L459 328 L461 326.5 L462 317 L462.5 305 L466 304.5 L469.5 303 L471.5 299 L472 307.5 L473.5 309 L474.5 311 L474.5 334.7 L476.5 331.5 L476.5 285.5 L477.5 282.5 L477.5 579 L478.5 579 L478.5 876.5 L478.5 824 L480 826 L485 825.5 L490 825 L491.5 824 L492.5 880 L492.5 279.5 L493.5 285 L493.5 851.6 L495 837 L498 832 L502 828 L502.5 866.6 L502.5 575 L503.5 575 L503.5 284 L504.5 283 L506.5 284 L506.5 580 L507.5 580 L507.5 877.5 L508.5 826 L509.5 843.7 L509.5 792 L510.5 795 L512 794 L513 796 L515 795 L515.5 826 L520 826.5 L525 825.5 L533 826.2 L534.7 795.7 L538 794 L543.3 792.7 L545.2 824.4 L546.5 866.6 L546.5 283 L547.5 282.6 L549 283.5 L551.5 282.6 L551.5 838.7 L554.7 825 L557.4 825 L559.2 795 L564.2 792 L565.5 829 L570 827 L574 828 L574.5 860.6 L574.5 574 L575.5 572 L575.5 283.3 L575.5 572 L576.5 574 L576.5 862.9 L577 825.2 L585 825.5 L592.4 825.2 L592.5 795 L593.5 836.5 L594.6 836.5 L598 831 L604.5 827.4 L606.4 793.5 L610 792.5 L614.3 792 L615 825.2 L620.3 825.2 L620.5 836.5 L620.5 582 L621.5 582 L621.5 328.6 L623.5 328.6 L624.5 290 L625.5 282.3 L628.5 284.8 L628.5 850.4 L628.6 827.4 L633.1 827.4 L633.9 798 L640 796 L648 794 L655 792 L656.5 792 L656.5 847.8 L656.5 570 L657.5 565 L657.5 280.3 L660 281.5 L662 280 L664.5 281 L665.5 282 L665.5 884.8 L666.5 884.8 L666.5 578 L666.5 840 L667.8 826 L674.6 826 L676.1 794.5 L680 792.5 L683.2 792 L684.5 828.4 L689 828 L693.8 828.4 L694.9 795.5 L698.5 793.4 L699.7 825.2 L705 825.5 L710.3 825.2 L710.5 853.2 L710.5 580 L711.5 575 L711.5 283.5 L712 285 L713 284 L716 282.5 L717.5 283.5 L717.5 580 L718.5 580 L718.5 868.7 L718.5 836.9 L723.5 836.9 L722.5 795 L723.5 810 L723.5 575 L724.5 570 L724.5 283 L725.3 318.8 L726 314 L727 316 L728 313 L730 314 L732.8 312 L733.5 315 L735 315.8 L736 332.4 L736.5 332.4 L736.5 867.7 L737.5 850 L738.5 882 L739 850 L739.5 815.6 L739.5 784.3 L740.8 778.1 L741.7 782 L742.2 764.7 L742.8 777.6 L743.7 764.2 L744.4 770.9 L744.8 764.7 L745.5 798.2 L745.8 775.9 L746.4 818.9 L746.8 774.2 L747.5 767.5 L748.2 780.4 L748.9 765.3 L749.5 756.3 L750 768.6 L750.6 763.6 L751.1 804.4 L751.5 810.5 L752 775.9 L752.7 775.3 L753.4 753.5 L754 764.2 L754.9 756.9 L755.6 769.7 L756.2 756.3 L757.3 760.8 L758 755.8 L760.1 755.8 L760.9 748.5 L761.5 726.2 L762 732.9 L762.5 730.1 L762.9 753.5 L763.6 767.5 L764.3 757.5 L764.7 787.6 L765.2 757.5 L765.6 725.3 L766.1 744.6 L766.7 744.1 L767.2 769.7 L767.6 805.5 L768.3 804.9 L768.7 788.7 L769.4 755.2 L769.9 793.2 L770.5 802.7 L771 764.7 L771.6 786.5 L772.3 764.2 L773 783.2 L773.7 769.7 L774.3 785.4 L775 765.3 L775.7 736.2 L776.3 764.2 L776.8 729.3 L777.2 806.6 L777.7 760.8 L778.4 787.6 L779 775.3 L779.5 779.8 L780.1 750.8 L780.8 754.1 L781.5 769.7 L782.2 743.5 L782.6 783.2 L783 743.5 L783.7 757.5 L784.2 769.7 L784.8 759.7 L785.5 781.5 L786.2 746.3 L786.6 780.9 L787.3 744.3 L788 768.6 L788.6 777.6 L789.3 770.9 L790 785.4 L790.6 801 L791.3 791 L791.8 802.2 L792.4 783.2 L793.1 797.7 L793.5 749.1 L794 784.3 L794.4 752.4 L794.9 786.5 L795.6 779.2 L796.2 793.2 L796.9 782 L797.6 780.9 L798.5 777.6 L799.1 782 L799.8 779.8 L800.5 803.3 L801.1 796.6 L801.8 798.2 L802.5 797.1 L803.4 801 L804.3 804.4 L804.9 802.2 L805.6 776.5 L806.1 797.7 L806.7 785.4 L807.4 799.4 L807.5 799.7 L807.5 285.3 L808.5 323 L809 332 L810.5 343 L812 341.5 L813.5 342.5 L815 340.5 L817 341 L819 339 L821 339.5 L823.3 337.5 L825 339.5 L826 338 L827.5 338.4 L827.5 575 L828.5 580 L828.5 857.5 L828.9 773.8 L830 780 L830.9 794.7 L831.7 781.4 L832.5 801 L833.1 791.9 L833.7 747.9 L834.5 730.1 L835.1 760.5 L835.9 749.3 L836.7 780 L837.6 803.8 L838.1 780 L838.7 747.2 L839.5 750 L840.4 747.9 L841.5 789.8 L842.3 761.9 L843.2 777.2 L844 750.7 L844.8 751.4 L845.9 761.9 L846.8 788.4 L847.6 756.3 L848.5 788.4 L849.3 757.7 L850.4 752.1 L851.2 761.9 L852.1 774.5 L852.9 797.5 L854.3 801.7 L854.9 761.9 L855.7 756.3 L856.6 745.1 L857.4 753.5 L858.2 781.4 L859.1 759.1 L859.9 792.6 L860.7 758.4 L861.6 826.1 L862.4 833.1 L863.3 778.6 L864.1 840.1 L864.7 756.3 L865.5 740.2 L866.3 767.5 L866.9 745.1 L867.7 767.5 L868.6 746.5 L869.4 780 L870.2 747.9 L871.1 768.9 L871.6 796.1 L872.5 742.3 L873.3 766.1 L874.1 819.8 L875 771.7 L875.5 812.2 L876.4 824 L877.2 742.3 L878.6 739.5 L879.5 771.7 L880.3 805.9 L881.1 775.9 L882.2 826.8 L883.1 801 L883.6 826.1 L884.5 802.4 L885.3 781.4 L886.2 757.7 L886.7 781.4 L887.6 749.3 L888.1 780 L888.9 800.3 L889.5 808.7 L890.3 752.1 L891.5 751.4 L892.6 752.8 L893.4 789.1 L894.3 773.1 L895.1 785.6 L895.9 775.2 L896.5 814.9 L897.6 811.5 L898.4 767.5 L899.3 792.6 L900.1 754.2 L901 785.6 L901.8 752.1 L902.6 740.2 L903.5 730.1 L904 767.5 L904.6 797.5 L905.4 747.2 L906.5 747.9 L907.4 767.5 L908.5 740.9 L909.6 749.3 L910.5 757 L911.3 731.2 L912.1 743 L913 763.3 L913.5 789.1 L914.4 757.7 L915.2 762.6 L916 754.9 L916.9 781.4 L917.4 745.1 L918.3 752.1 L919.1 781.4 L919.9 794 L920.8 773.8 L921.9 779.3 L923 775.9 L923.9 770.3 L924.5 770 L924.5 296 L925.5 321 L925.5 346 L927.5 346 L927.5 834 L928.5 839.5 L929.5 839.5 L929.5 341.4 L930.5 370 L935.5 370 L935.5 331.4 L936.5 331.4 L936.5 310.2 L937.5 310 L937.5 308.5 L938.3 308 L938.3 296.8 L939 295.6 L941.8 294 L942.4 300.7 L942.6 294 L943.5 288 L943.5 825.6 L945.2 796.5 L947 794.5 L953.5 794.5 L955 829 L957.2 829 L957.5 845.5 L957.5 580 L958.5 575 L958.5 280.5 L960.5 280.5 L960.5 575 L961.5 580 L961.5 840.7 L962 824.7 L970 824 L976.6 824.7 L977.3 865.6 L978.4 837.2 L982.4 832.7 L982.5 284.8 L984.5 284 L986.5 283 L986.5 575 L987.5 580 L987.5 884.8 L987.5 853 L988.5 853 L988.5 827.4 L996 826.5 L1005.2 825.2 L1007 798.8 L1010.8 794.5 L1019.4 793.5 L1021.4 826 L1024.4 826 L1025.5 844.8 L1025.5 282.3 L1025.5 835 L1026.5 826 L1027 824.7 L1038.5 824.7 L1038.5 827.6 L1038.5 281 L1040 282.5 L1042 280.5 L1043.5 281 L1043.5 575 L1044.5 575 L1044.5 884.8 L1044.5 282 L1045.5 280.5 L1047 282 L1048.5 282 L1048.5 856.8 L1048.5 819.9 L1050.8 795.7 L1055 794 L1061 792.7 L1062.9 825.2 L1065.9 825.2 L1066.5 826 L1066.5 885 L1066.5 281 L1067.5 281 L1067.5 884 L1067.5 283 L1068.5 283 L1070 280.5 L1071.5 283 L1073 280.5 L1076.5 281.5 L1076.5 864.8 L1077 825.2 L1081.7 825.2 L1084 796.5 L1086 793.5 L1094.2 793.5 L1095.3 828.2 L1097.5 828.2 L1097.5 835.7 L1097.5 575 L1098.5 570 L1098.5 281 L1100 280.5 L1102 283 L1104.3 282.6 L1105.7 306.7 L1106.1 329.3 L1106.5 575 L1107.5 580 L1107.5 865.9 L1108 826.7 L1119.4 826.7 L1121.2 797.2 L1126 794.5 L1130.8 792.7 L1132.5 800 L1133.5 846.7 L1133.5 575 L1134.5 570 L1134.5 282 L1136.5 280.5 L1138.5 282 L1138.5 870.9 L1139 825.2 L1148.9 825.2 L1149.5 880.5 L1149.5 281.5 L1151.5 280.5 L1153.5 281 L1153.5 848.6 L1155 838 L1159.5 831.6 L1160.5 831 L1161.5 794.4 L1161.5 835.7 L1162 824.8 L1175.5 824.8 L1175.5 843.3 L1175.5 575 L1176.5 570 L1176.5 281.8 L1179.5 282 L1179.5 850.7 L1181 838 L1186 827.3 L1188.2 792.3 L1189.5 795 L1190.5 876.6 L1190.5 290 L1192 298.4 L1192.5 315.8 L1193.5 310 L1194.5 318 L1195.5 312 L1196.5 317 L1198 314 L1198.8 334.6 L1201 339 L1201.9 355 L1202.6 370.8 L1205 370 L1207 372 L1209 370.5 L1212.4 370.8 L1212.4 333.9 L1213.5 316.5 L1213.5 818.4 L1214.2 790.8 L1214.7 762.7 L1215.5 758 L1216.3 756.6 L1217.1 750.6 L1217.9 758.6 L1218.7 764 L1219.8 772.1 L1220.6 788.2 L1221.4 777.4 L1222.2 801.6 L1223 778.1 L1223.8 789.5 L1224.6 768 L1225.4 765.4 L1226.2 812.3 L1227 801.6 L1227.8 810.3 L1228.4 770.7 L1229.2 751.3 L1230 764 L1230.8 756 L1231.6 762.7 L1232.4 758.6 L1233.2 769.4 L1233.8 788.2 L1234.6 773.4 L1235.4 789.5 L1235.9 772.1 L1236.4 733.2 L1237.5 737.2 L1238.3 736.5 L1239.1 745.2 L1239.7 793.5 L1240.5 815.6 L1241 769.4 L1241.8 751.9 L1242.6 742.6 L1243.1 761.3 L1243.9 765.4 L1244.7 785.5 L1245.6 795.5 L1246.4 780.1 L1246.9 770.7 L1247.7 725.1 L1248.5 717.3 L1249.3 749.3 L1250.1 729.1 L1250.9 751.3 L1251.7 741.2 L1252.5 753.3 L1253.3 737.2 L1254.1 758 L1254.7 745.2 L1255.2 768 L1256 738.5 L1256.8 759.3 L1257.6 733.8 L1258.4 723.1 L1259.2 737.2 L1260.3 721.1 L1261.1 731.8 L1261.6 756.6 L1262.5 749.3 L1263.3 721.8 L1264.1 734.5 L1264.9 718.4 L1265.7 736.5 L1266.5 774.7 L1267.3 717.3 L1268.1 738.5 L1268.9 760 L1269.7 735.8 L1270.5 745.2 L1271.3 764 L1272.4 768.7 L1273.2 743.9 L1274 747.9 L1274.8 731.8 L1275.6 721.8 L1276.4 719.1 L1277.2 758.6 L1277.7 725.1 L1278.5 738.5 L1279.4 757.3 L1280.2 722.4 L1281 734.5 L1281.8 728.5 L1282.6 742.6 L1283.4 759.3 L1284.2 726.5 L1285 725.1 L1285 736.4 L1285.8 724 L1286.3 722.1 L1286.9 742.1 L1287.7 733.5 L1288.4 757.8 L1289 744.9 L1289.6 725 L1290.1 760.1 L1290.5 716.4 L1291.1 738.3 L1291.7 761.6 L1292.2 727.8 L1292.8 740.2 L1293.4 748.7 L1293.9 736.4 L1294.5 741.1 L1295.1 733 L1295.6 758.2 L1296.4 769.6 L1297 756.3 L1297.7 742.1 L1298.3 754.4 L1298.9 738.3 L1299.4 721.2 L1300 729.7 L1300.6 751.6 L1301.3 752.5 L1301.9 741.1 L1302.7 740.2 L1303.4 724.5 L1304 731.6 L1304.8 724 L1305.3 717.2 L1306.1 732.6 L1306.9 733.5 L1307.6 745.9 L1308.4 743 L1309 736.4 L1309.5 717.2 L1310.3 727.8 L1310.9 747.3 L1311.6 725 L1312.4 722.1 L1312.9 748.7 L1313.3 719.3 L1313.9 738.3 L1314.5 758.7 L1315 743 L1315.6 730.2 L1316.4 723.1 L1316.9 730.7 L1317.5 718.3 L1318.1 743.5 L1318.7 729.7 L1319.2 717.2 L1320.2 717.8 L1320.7 743.5 L1321.3 772.5 L1321.9 722.1 L1322.5 778.7 L1323 756.8 L1323.4 714 L1324 743 L1324.5 757.3 L1325.1 746.8 L1325.7 774.9 L1326.3 740.6 L1327 740.2 L1327.6 767.7 L1328.3 779.6 L1328.9 750.6 L1329.5 734.5 L1330.2 733.5 L1330.8 758.2 L1331.6 766.8 L1332.1 740.2 L1332.7 763 L1333.1 738.3 L1333.5 732.6 L1334.2 737.3 L1334.6 762 L1335.4 757.3 L1336.3 755.4 L1337.3 754.4 L1338.4 754.4 L1339.4 756.8 L1339.6 777.7 L1340.5 776.3 L1341.3 774.9 L1341.7 761.1 L1342.2 775.3" stroke="#4c0050" stroke-width="1" stroke-linejoin="miter"/></g>
<rect x="1034" y="279" width="1" height="606" fill="#f63cf6"/><rect x="1035" y="279" width="1" height="606" fill="#4c0050"/><g shape-rendering="geometricPrecision"><path d="M1032.0 279H1039.0V287.5L1035.5 290.5L1032.0 287.5Z" fill="#4c0050"/><path d="M1032.0 885.5H1039.0V877.5L1035.5 874.5L1032.0 877.5Z" fill="#4c0050"/><circle cx="1035.5" cy="824.5" r="3.7" fill="#4c0050"/></g>
<rect x="1342" y="279" width="1" height="606" fill="#f63cf6"/><rect x="1343" y="279" width="1" height="606" fill="#4c0050"/><g shape-rendering="geometricPrecision"><path d="M1340.0 279H1347.0V287.5L1343.5 290.5L1340.0 287.5Z" fill="#4c0050"/><path d="M1340.0 885.5H1347.0V877.5L1343.5 874.5L1340.0 877.5Z" fill="#4c0050"/><circle cx="1343.5" cy="341.5" r="3.7" fill="#4c0050"/></g>
<path d="M110 885.5H1566" stroke="#000" stroke-width="1"/>
<path d="M1565.5 279V886" stroke="#000" stroke-width="1"/>
<path d="M1566 279.5h6.5M1566 309.5h3.5M1566 340.5h6.5M1566 370.5h3.5M1566 400.5h6.5M1566 431.5h3.5M1566 461.5h6.5M1566 491.5h3.5M1566 521.5h6.5M1566 552.5h3.5M1566 582.5h6.5M1566 612.5h3.5M1566 643.5h6.5M1566 673.5h3.5M1566 703.5h6.5M1566 734.5h3.5M1566 764.5h6.5M1566 794.5h3.5M1566 824.5h6.5M1566 855.5h3.5M1566 885.5h6.5M214.5 885v7M333.5 885v3.5M453.5 885v7M573.5 885v3.5M693.5 885v7M812.5 885v3.5M932.5 885v7M1052.5 885v3.5M1171.5 885v7M1291.5 885v3.5M1411.5 885v7M1530.5 885v3.5" stroke="#000" stroke-width="1"/>
</g>
<g font-family="Liberation Sans, sans-serif" font-size="16" fill="#000"><text x="1574.2" y="284.8" letter-spacing="0">0,0</text><text x="1574.2" y="345.4" letter-spacing="0">0,2</text><text x="1574.2" y="406.0" letter-spacing="0">0,4</text><text x="1574.2" y="466.6" letter-spacing="0">0,6</text><text x="1574.2" y="527.2" letter-spacing="0">0,8</text><text x="1574.2" y="587.8" letter-spacing="0.5">+/-1</text><text x="1574.2" y="648.4" letter-spacing="0.4">-0,8</text><text x="1574.2" y="709.0" letter-spacing="0.4">-0,6</text><text x="1574.2" y="769.6" letter-spacing="0.4">-0,4</text><text x="1574.2" y="830.2" letter-spacing="0.4">-0,2</text><text x="1574.2" y="890.8" letter-spacing="0.4">-0,0</text>
<text x="1282.5" y="261.8" letter-spacing="0.18">PF negativo indica la carga/fuente capacitiva.</text>
<text font-size="13" letter-spacing="0.04" transform="translate(1619.5,622.3) rotate(-90)">PF ind/cap [1]</text>
</g>
</svg>
</body></html>
